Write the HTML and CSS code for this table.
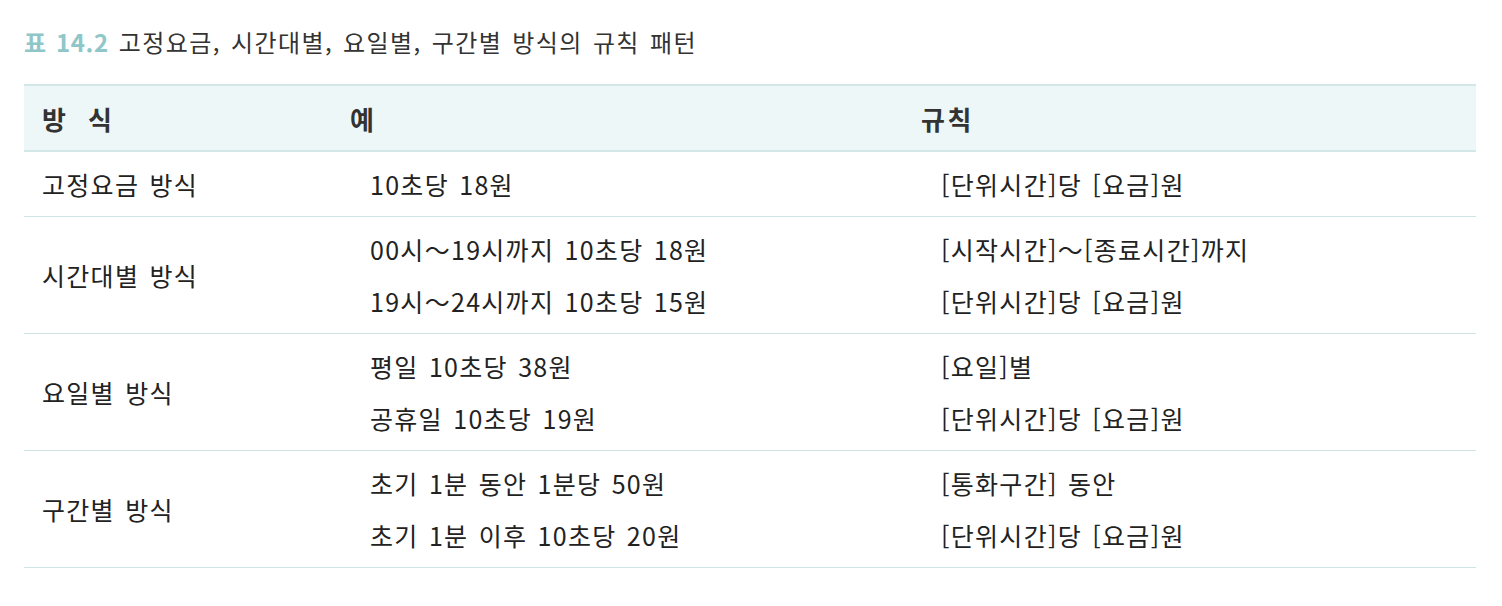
FILE: index.html
```html
<!DOCTYPE html>
<html lang="ko">
<head>
<meta charset="utf-8">
<link rel="stylesheet" href="styles.css">
</head>
<body>
<div class="page">
  <h1 class="caption"><span class="num">표 14.2</span> 고정요금, 시간대별, 요일별, 구간별 방식의 규칙 패턴</h1>
  <table class="rules">
    <colgroup>
      <col class="c1"><col class="c2"><col class="c3">
    </colgroup>
    <thead>
      <tr><th>방&nbsp;&nbsp;식</th><th>예</th><th>규칙</th></tr>
    </thead>
    <tbody>
      <tr>
        <td>고정요금 방식</td>
        <td class="ex"><div>10초당 18원</div></td>
        <td class="ex"><div>[단위시간]당 [요금]원</div></td>
      </tr>
      <tr>
        <td>시간대별 방식</td>
        <td class="ex"><div>00시～19시까지 10초당 18원</div><div>19시～24시까지 10초당 15원</div></td>
        <td class="ex"><div>[시작시간]～[종료시간]까지</div><div>[단위시간]당 [요금]원</div></td>
      </tr>
      <tr>
        <td>요일별 방식</td>
        <td class="ex"><div>평일 10초당 38원</div><div>공휴일 10초당 19원</div></td>
        <td class="ex"><div>[요일]별</div><div>[단위시간]당 [요금]원</div></td>
      </tr>
      <tr>
        <td>구간별 방식</td>
        <td class="ex"><div>초기 1분 동안 1분당 50원</div><div>초기 1분 이후 10초당 20원</div></td>
        <td class="ex"><div>[통화구간] 동안</div><div>[단위시간]당 [요금]원</div></td>
      </tr>
    </tbody>
  </table>
</div>
</body>
</html>
```

FILE: styles.css
```css
html, body {
  margin: 0;
  padding: 0;
  background: #ffffff;
}
body {
  font-family: "Noto Sans CJK KR", "Noto Sans", sans-serif;
  color: #222222;
}
.page {
  padding: 25px 26px 0 24px;
}
.caption {
  margin: 0;
  font-size: 24px;
  font-weight: 400;
  line-height: 34px;
  color: #333333;
  letter-spacing: 1.4px;
  word-spacing: 2px;
}
.caption .num {
  color: #8fc6c8;
  font-weight: 700;
  letter-spacing: 0.6px;
}
.rules {
  margin-top: 25px;
  width: 1452px;
  border-collapse: collapse;
  table-layout: fixed;
}
.c1 { width: 308px; }
.c2 { width: 571px; }
.c3 { width: 573px; }
.rules th {
  background: #eef7f7;
  border-top: 2px solid #d3e7e8;
  border-bottom: 2px solid #d3e7e8;
  height: 64px;
  padding: 0 0 0 18px;
  text-align: left;
  font-size: 26px;
  font-weight: 700;
  letter-spacing: 2.5px;
  color: #333333;
}
.rules td {
  border-bottom: 1px solid #cfe4e6;
  padding: 6px 0 6px 18px;
  font-size: 25px;
  line-height: 52px;
  letter-spacing: 1.3px;
  word-spacing: 2px;
  color: #222222;
  vertical-align: middle;
}
.rules td.ex {
  padding-left: 38px;
}
```
